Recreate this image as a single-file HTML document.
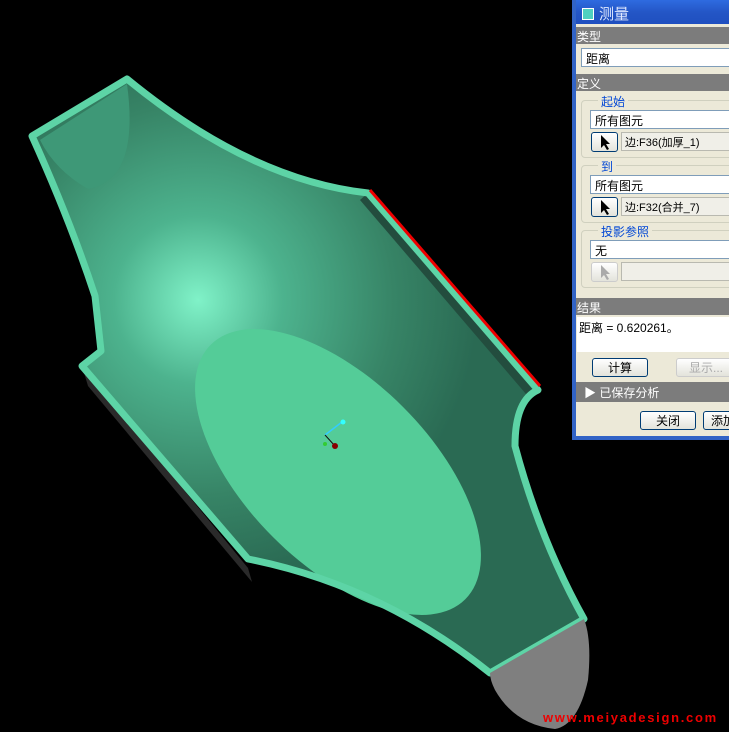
<!DOCTYPE html>
<html><head><meta charset="utf-8"><style>
*{margin:0;padding:0;box-sizing:border-box}
body{width:729px;height:732px;background:#000;position:relative;overflow:hidden;font-family:"Liberation Sans","Noto Sans CJK SC",sans-serif;font-size:12px}
#dlg{position:absolute;left:572px;top:0;width:160px;height:440px;background:#ece9d8;border-left:4px solid #3163c6;border-bottom:4px solid #3163c6}
.tb{height:24px;background:linear-gradient(#2e6be0,#2456c6 50%,#1f4fbf);color:#dfe8ff;font-size:15px;padding:3px 0 0 6px}
.tb i{display:inline-block;width:12px;height:12px;background:#4fd0c0;border:1px solid #fff;margin-right:5px;vertical-align:-1px}
.hd{height:17px;background:#7c7c7c;color:#fff;padding:1px 0 0 1px;font-size:12px}
.in{position:absolute;background:#fff;border:1px solid #7f9db9;height:19px;padding:1px 4px;font-size:12px}
.grp{position:absolute;left:5px;width:160px;border:1px solid #d0d0bf;border-radius:4px}
.lb{position:absolute;color:#0046d5;background:#ece9d8;padding:0 3px;font-size:12px}
.btn{position:absolute;border:1px solid #003c74;border-radius:3px;background:linear-gradient(#fff,#e3e3db);text-align:center;font-size:12px}
.sel{position:absolute;background:#f0efe8;border:1px solid #b9b9b0;height:19px;padding:1px 3px;font-size:11px}
</style></head><body>
<svg width="729" height="732" style="position:absolute;left:0;top:0">
<defs>
<radialGradient id="hl" cx="198" cy="300" r="280" gradientUnits="userSpaceOnUse"><stop offset="0" stop-color="#80f2c8"/><stop offset="0.3" stop-color="#4db38e"/><stop offset="0.7" stop-color="#378466"/><stop offset="1" stop-color="#2a6a53"/></radialGradient>
</defs>
<polygon points="82,366 248,568 252,582 88,386" fill="#2a2a2a"/>
<path d="M32,136 L127,79 Q250,180 368,193 L538,390 Q515,400 515,446 Q540,540 584,619 L490,673 Q380,585 248,559 L82,366 L101,351 L95,296 Q70,220 32,136Z" fill="url(#hl)"/>
<path d="M40,140 L127,84 Q140,180 88,189 Q55,170 40,140Z" fill="#3e9877"/>
<ellipse cx="338" cy="472" rx="180" ry="92" transform="rotate(45 338 472)" fill="#54cc98"/>
<path d="M368,193 L538,390 L526,394 L360,200Z" fill="#234d3e"/>
<path d="M32,136 L127,79 Q250,180 368,193 L538,390 Q515,400 515,446 Q540,540 584,619 L490,673 Q380,585 248,559 L82,366 L101,351 L95,296 Q70,220 32,136Z" fill="none" stroke="#5dd4a6" stroke-width="7" stroke-linejoin="round"/>
<line x1="370" y1="190" x2="540" y2="386" stroke="#e00" stroke-width="3"/>
<path d="M584,619 Q592,640 588,680 Q578,725 555,729 Q515,725 495,690 Q490,680 490,673Z" fill="#7f7f7f"/>
<line x1="325" y1="435" x2="342" y2="422" stroke="#3cf" stroke-width="1.5"/><circle cx="343" cy="422" r="2.5" fill="#3ff"/>
<line x1="325" y1="435" x2="335" y2="446" stroke="#111" stroke-width="1"/><circle cx="335" cy="446" r="3" fill="#800"/>
<circle cx="325" cy="444" r="2" fill="#3c3"/>
<text x="543" y="722" fill="#e00" font-size="13" font-weight="bold" letter-spacing="1.7" font-family="Liberation Sans,sans-serif">www.meiyadesign.com</text>
</svg>
<div id="dlg">
<div class="tb"><i></i>测量</div>
<div class="hd" style="margin-top:3px">类型</div>
<div class="in" style="left:5px;top:48px;width:160px">距离</div>
<div class="hd" style="position:absolute;top:74px;width:160px">定义</div>
<div class="grp" style="top:100px;height:58px"></div><div class="lb" style="left:22px;top:93px">起始</div>
<div class="in" style="left:14px;top:110px;width:150px">所有图元</div>
<div class="btn" style="left:15px;top:132px;width:27px;height:20px"><svg width="12" height="16" style="margin-top:1px"><path d="M2,1 L2,14 L5,11 L8,16 L10,15 L7,10 L11,10Z" fill="#000"/></svg></div>
<div class="sel" style="left:45px;top:132px;width:120px">边:F36(加厚_1)</div>
<div class="grp" style="top:165px;height:58px"></div><div class="lb" style="left:22px;top:158px">到</div>
<div class="in" style="left:14px;top:175px;width:150px">所有图元</div>
<div class="btn" style="left:15px;top:197px;width:27px;height:20px"><svg width="12" height="16" style="margin-top:1px"><path d="M2,1 L2,14 L5,11 L8,16 L10,15 L7,10 L11,10Z" fill="#000"/></svg></div>
<div class="sel" style="left:45px;top:197px;width:120px">边:F32(合并_7)</div>
<div class="grp" style="top:230px;height:58px"></div><div class="lb" style="left:22px;top:223px">投影参照</div>
<div class="in" style="left:14px;top:240px;width:150px">无</div>
<div class="btn" style="left:15px;top:262px;width:27px;height:20px;border-color:#ccc"><svg width="12" height="16" style="margin-top:1px"><path d="M2,1 L2,14 L5,11 L8,16 L10,15 L7,10 L11,10Z" fill="#aaa"/></svg></div>
<div class="sel" style="left:45px;top:262px;width:120px"></div>
<div class="hd" style="position:absolute;top:298px;width:160px">结果</div>
<div style="position:absolute;left:1px;top:317px;width:160px;height:35px;background:#fff;font-size:12px;padding:2px">距离 = 0.620261。</div>
<div class="btn" style="left:16px;top:358px;width:56px;height:19px">计算</div>
<div class="btn" style="left:100px;top:358px;width:60px;height:19px;border-color:#ccc;color:#aaa">显示...</div>
<div class="hd" style="position:absolute;top:382px;width:160px;height:20px;padding:2px 0 0 8px">▶ 已保存分析</div>
<div class="btn" style="left:64px;top:411px;width:56px;height:19px">关闭</div>
<div class="btn" style="left:127px;top:411px;width:40px;height:19px">添加</div>
</div>
</body></html>
